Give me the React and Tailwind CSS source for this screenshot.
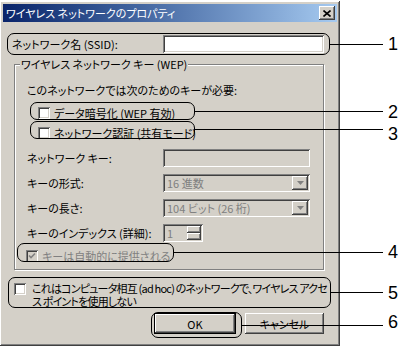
import React from "react";

const sunken =
  "shadow-[inset_1px_1px_0_#808080,inset_-1px_-1px_0_#ffffff,inset_2px_2px_0_#404040,inset_-2px_-2px_0_#d4d0c8]";
const raised =
  "shadow-[inset_-1px_-1px_0_#404040,inset_1px_1px_0_#ffffff,inset_-2px_-2px_0_#808080,inset_2px_2px_0_#d4d0c8]";

function Check({ checked = false, disabled = false }) {
  return (
    <div
      className={`relative w-[12px] h-[12px] shrink-0 ${sunken} ${
        disabled ? "bg-[#d4d0c8]" : "bg-white"
      }`}
    >
      {checked && (
        <svg viewBox="0 0 12 12" className="absolute inset-0 w-[12px] h-[12px]">
          <path
            d="M3 5.5 L5 7.5 L9 3.5"
            fill="none"
            stroke={disabled ? "#808080" : "#000"}
            strokeWidth="1.6"
          />
        </svg>
      )}
    </div>
  );
}

function Arrow() {
  return (
    <div className={`w-[16px] h-[14px] bg-[#d4d0c8] ${raised} flex items-center justify-center`}>
      <svg viewBox="0 0 7 4" className="w-[7px] h-[4px]">
        <path d="M0 0 H7 L3.5 4 Z" fill="#808080" />
      </svg>
    </div>
  );
}

export default function App() {
  return (
    <div className="relative w-[402px] h-[352px] bg-white overflow-hidden font-['Noto_Sans_CJK_JP','Noto_Sans',sans-serif] text-[11px] leading-[12px] text-black [font-feature-settings:'palt'] whitespace-nowrap">
      {/* Window */}
      <div className={`mt-[1px] w-[340px] h-[345px] bg-[#d4d0c8] p-[3px] flex flex-col ${raised}`}>
        {/* Title bar */}
        <div className="h-[18px] flex items-center justify-between pl-[3px] pr-[2px] bg-gradient-to-r from-[#0a246a] to-[#a6caf0]">
          <span className="text-white text-[11px]">ワイヤレス ネットワークのプロパティ</span>
          <div className={`w-[16px] h-[14px] bg-[#d4d0c8] ${raised} flex items-center justify-center`}>
            <svg viewBox="0 0 8 7" className="w-[8px] h-[7px]">
              <path d="M0.5 0.5 L7.5 6.5 M7.5 0.5 L0.5 6.5" stroke="#000" strokeWidth="1.6" />
            </svg>
          </div>
        </div>

        {/* Body */}
        <div className="pl-[9px] flex flex-col">
          {/* SSID */}
          <div className="mt-[13px] h-[18px] flex items-center">
            <span className="w-[151px]">ネットワーク名 (SSID):</span>
            <div className={`w-[161px] h-[18px] bg-white ${sunken}`} />
          </div>

          {/* Group box */}
          <div className="relative mt-[11px] ml-[2px] w-[310px] h-[206px] border border-[#808080] shadow-[1px_1px_0_#ffffff,inset_1px_1px_0_#ffffff] pl-[12px] flex flex-col">
            <span className="absolute -top-[7px] left-[5px] px-[1px] bg-[#d4d0c8]">
              ワイヤレス ネットワーク キー (WEP)
            </span>
            <div className="mt-[17px] h-[16px] flex items-center">
              このネットワークでは次のためのキーが必要:
            </div>
            <div className="mt-[6px] h-[18px] flex items-center pl-[11px] gap-[4px]">
              <Check />
              <span>データ暗号化 (WEP 有効)</span>
            </div>
            <div className="mt-[2px] h-[18px] flex items-center pl-[11px] gap-[4px]">
              <Check />
              <span>ネットワーク認証 (共有モード)</span>
            </div>
            <div className="mt-[7px] h-[18px] flex items-center">
              <span className="w-[136px]">ネットワーク キー:</span>
              <div className={`w-[147px] h-[18px] bg-[#d4d0c8] ${sunken}`} />
            </div>
            <div className="mt-[7px] h-[18px] flex items-center">
              <span className="w-[136px]">キーの形式:</span>
              <div className={`w-[147px] h-[18px] bg-[#d4d0c8] ${sunken} flex items-center justify-between pl-[4px] pr-[2px]`}>
                <span className="text-[#808080]">16 進数</span>
                <Arrow />
              </div>
            </div>
            <div className="mt-[7px] h-[18px] flex items-center">
              <span className="w-[136px]">キーの長さ:</span>
              <div className={`w-[147px] h-[18px] bg-[#d4d0c8] ${sunken} flex items-center justify-between pl-[4px] pr-[2px]`}>
                <span className="text-[#808080]">104 ビット (26 桁)</span>
                <Arrow />
              </div>
            </div>
            <div className="mt-[7px] h-[18px] flex items-center">
              <span className="w-[136px]">キーのインデックス (詳細):</span>
              <div className={`w-[40px] h-[18px] bg-[#d4d0c8] ${sunken} flex items-center justify-between pl-[4px] pr-[2px]`}>
                <span className="text-[#808080]">1</span>
                <div className="flex flex-col">
                  <div className={`w-[14px] h-[7px] bg-[#d4d0c8] ${raised}`} />
                  <div className={`w-[14px] h-[7px] bg-[#d4d0c8] ${raised}`} />
                </div>
              </div>
            </div>
            <div className="mt-[5px] h-[18px] flex items-center -ml-[1px] gap-[4px]">
              <Check checked disabled />
              <span className="text-[#808080]">キーは自動的に提供される</span>
            </div>
          </div>

          {/* Ad hoc */}
          <div className="mt-[12px] flex items-start gap-[6px] ml-[2px]">
            <div className="mt-[1px]">
              <Check />
            </div>
            <div className="flex flex-col leading-[13px] tracking-[-0.8px]">
              <span>これはコンピュータ相互 (ad hoc) のネットワークで、ワイヤレス アクセ</span>
              <span>ス ポイントを使用しない</span>
            </div>
          </div>

          {/* Buttons */}
          <div className="mt-[5px] w-[312px] flex justify-end gap-[9px]">
            <div className="w-[82px] h-[21px] border border-black flex">
              <div className={`flex-1 bg-[#d4d0c8] ${raised} flex items-center justify-center`}>OK</div>
            </div>
            <div className={`w-[79px] h-[21px] bg-[#d4d0c8] ${raised} flex items-center justify-center`}>
              キャンセル
            </div>
          </div>
        </div>
      </div>

      {/* Callouts */}
      <div className="absolute left-[7px] top-[33px] w-[323px] h-[22px] rounded-[7px] border border-black" />
      <div className="absolute left-[30px] top-[102px] w-[165px] h-[18px] rounded-[7px] border border-black" />
      <div className="absolute left-[30px] top-[121px] w-[165px] h-[18px] rounded-[7px] border border-black" />
      <div className="absolute left-[17px] top-[243px] w-[157px] h-[19px] rounded-[7px] border border-black" />
      <div className="absolute left-[8px] top-[277px] w-[323px] h-[31px] rounded-[7px] border border-black" />
      <div className="absolute left-[151px] top-[312px] w-[91px] h-[26px] rounded-[7px] border border-black" />

      <div className="absolute left-[330px] top-[44px] w-[53px] h-px bg-black" />
      <div className="absolute left-[195px] top-[111px] w-[188px] h-px bg-black" />
      <div className="absolute left-[195px] top-[129px] w-[188px] h-px bg-black" />
      <div className="absolute left-[174px] top-[252px] w-[209px] h-px bg-black" />
      <div className="absolute left-[331px] top-[292px] w-[52px] h-px bg-black" />
      <div className="absolute left-[242px] top-[325px] w-[141px] h-px bg-black" />

      <div className="absolute left-[388px] top-[34px] text-[18px] leading-[20px] font-['Liberation_Sans',sans-serif]">1</div>
      <div className="absolute left-[388px] top-[102px] text-[18px] leading-[20px] font-['Liberation_Sans',sans-serif]">2</div>
      <div className="absolute left-[388px] top-[124px] text-[18px] leading-[20px] font-['Liberation_Sans',sans-serif]">3</div>
      <div className="absolute left-[388px] top-[242px] text-[18px] leading-[20px] font-['Liberation_Sans',sans-serif]">4</div>
      <div className="absolute left-[388px] top-[283px] text-[18px] leading-[20px] font-['Liberation_Sans',sans-serif]">5</div>
      <div className="absolute left-[388px] top-[312px] text-[18px] leading-[20px] font-['Liberation_Sans',sans-serif]">6</div>
    </div>
  );
}
